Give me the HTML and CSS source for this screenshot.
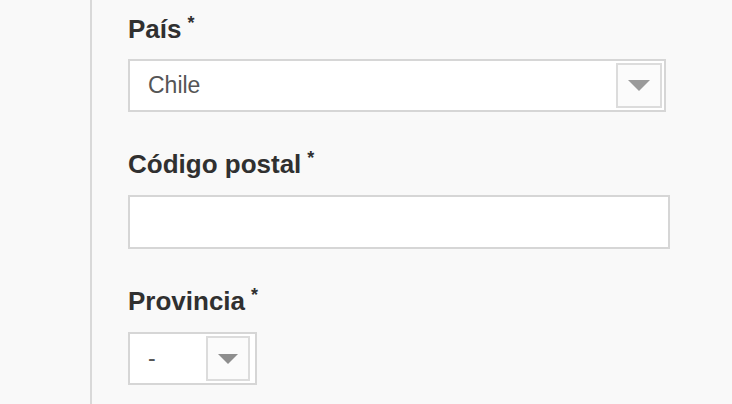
FILE: index.html
```html
<!DOCTYPE html>
<html lang="es">
<head>
  <meta charset="UTF-8">
  <meta name="viewport" content="width=device-width, initial-scale=1.0">
  <title>Dirección</title>
  <link rel="stylesheet" href="styles.css">
</head>
<body>
<div class="page">
  <div class="form-panel">

    <div class="field">
      <label class="field-label">País<span class="req">*</span></label>
      <div class="select select-wide">
        <span class="select-value">Chile</span>
        <span class="select-arrow">
          <svg width="22" height="11" viewBox="0 0 22 11"><path d="M0 0 H22 L11 11 Z" fill="#9a9a9a"/></svg>
        </span>
      </div>
    </div>

    <div class="field">
      <label class="field-label">Código postal<span class="req">*</span></label>
      <div class="text-input"></div>
    </div>

    <div class="field">
      <label class="field-label">Provincia<span class="req">*</span></label>
      <div class="select select-small">
        <span class="select-value">-</span>
        <span class="select-arrow">
          <svg width="20" height="10" viewBox="0 0 20 10"><path d="M0 0 H20 L10 10 Z" fill="#8e8e8e"/></svg>
        </span>
      </div>
    </div>

  </div>
</div>
</body>
</html>
```

FILE: styles.css
```css
body {
  margin: 0;
  background-color: #f9f9f9;
  color: #333333;
  font-family: 'Liberation Sans', Arial, sans-serif;
}

.page {
  padding-left: 90px;
  height: 404px;
  overflow: hidden;
}

.form-panel {
  border-left: 2px solid #d9d9d9;
  padding: 14px 0 0 36px;
  height: 100%;
  box-sizing: border-box;
}

.field {
  margin-bottom: 37px;
}

.field-label {
  display: block;
  font-size: 26px;
  line-height: 30px;
  font-weight: bold;
  color: #303030;
  margin-bottom: 16px;
}

.req {
  font-size: 18px;
  line-height: 1;
  margin-left: 6px;
  vertical-align: 9px;
}

.select {
  display: flex;
  align-items: center;
  height: 53px;
  box-sizing: border-box;
  border: 2px solid #d6d6d6;
  background-color: #ffffff;
}

.select-wide {
  width: 538px;
  margin-top: -1px;
}

.select-small {
  width: 129px;
}

.select-value {
  flex: 1;
  padding-left: 18px;
  font-size: 23px;
  color: #555555;
}

.select-arrow {
  display: flex;
  justify-content: center;
  align-items: center;
  width: 46px;
  height: 45px;
  box-sizing: border-box;
  border: 2px solid #dcdcdc;
  background-color: #fbfbfb;
  margin-right: 2px;
}

.select-small .select-arrow {
  width: 44px;
  margin-right: 5px;
}

.text-input {
  width: 542px;
  height: 54px;
  box-sizing: border-box;
  border: 2px solid #d6d6d6;
  background-color: #ffffff;
}
```
